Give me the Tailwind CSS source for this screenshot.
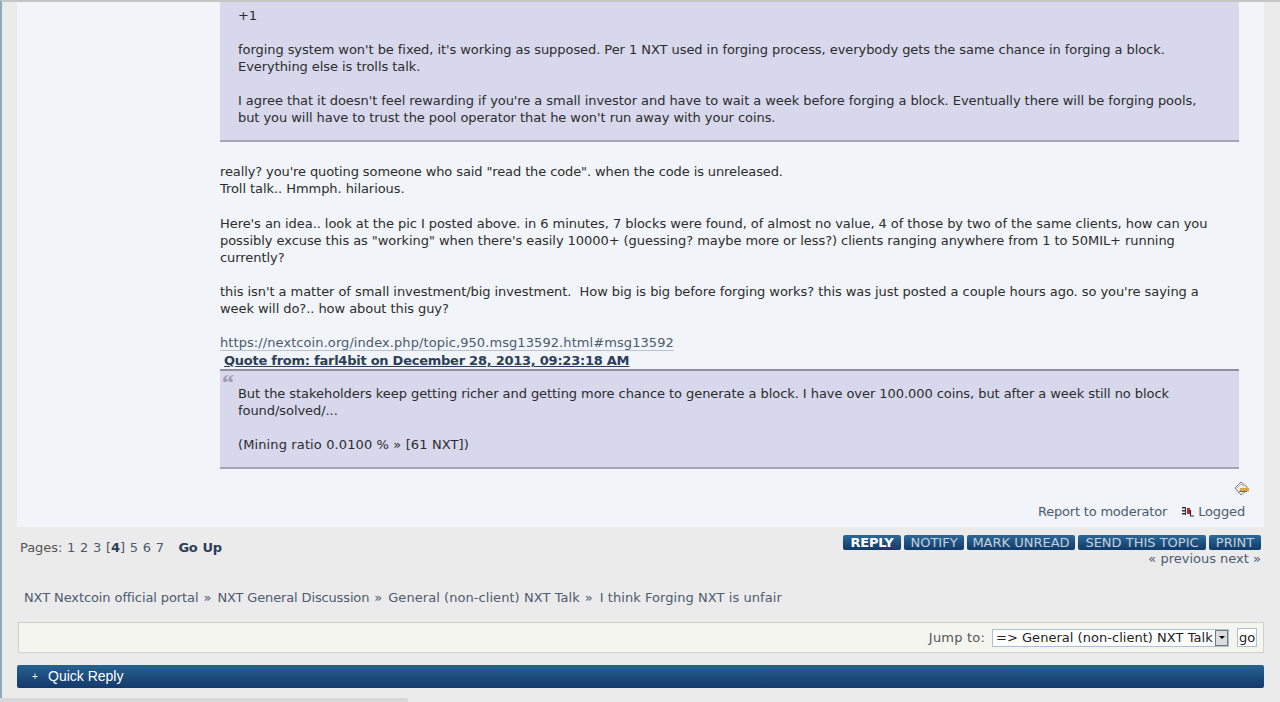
<!DOCTYPE html>
<html lang="en">
<head>
  <meta charset="UTF-8">
  <title>I think Forging NXT is unfair</title>
  <script src="https://cdn.jsdelivr.net/npm/@tailwindcss/browser@4"></script>
</head>
<body class="bg-[#ebebeb] text-[#333] font-['DejaVu_Sans',sans-serif] text-[13px] leading-[17.1px] tracking-[-0.06px] h-[702px] overflow-hidden">
  <div class="h-[702px] relative border-t-2 border-t-[#c4c6c8] border-l-2 border-l-[#8fa9bd] pl-[15px] pr-[16px]">

    <!-- post -->
    <div class="bg-[#f1f5f9] h-[525px] flex flex-col pl-[203px] pr-[25px]">
      <div class="bg-[#d7d8ec] border-b-2 border-b-[#a3a4b6] pl-[18px] pr-[30px] pt-[4.8px] pb-[13.5px] text-[#2c2c2c]">
        +1<br><br>
        forging system won't be fixed, it's working as supposed. Per 1 NXT used in forging process, everybody gets the same chance in forging a block. Everything else is trolls talk.<br><br>
        I agree that it doesn't feel rewarding if you're a small investor and have to wait a week before forging a block. Eventually there will be forging pools, but you will have to trust the pool operator that he won't run away with your coins.
      </div>
      <div class="mt-[21.3px] text-[#2c2c2c]">
        <span class="tracking-[-0.11px]">really? you're quoting someone who said "read the code". when the code is unreleased.</span><br>
        Troll talk.. Hmmph. hilarious.<br><br>
        Here's an idea.. look at the pic I posted above. in 6 minutes, 7 blocks were found, of almost no value, 4 of those by two of the same clients, how can you possibly excuse this as "working" when there's easily 10000+ (guessing? maybe more or less?) clients ranging anywhere from 1 to 50MIL+ running currently?<br><br>
        this isn't a matter of small investment/big investment.&nbsp; How big is big before forging works? this was just posted a couple hours ago. so you're saying a<br>
        week will do?.. how about this guy?<br><br>
        <a href="#" class="text-[#4a5a70] border-b border-b-[#b8c4d4] tracking-[0.08px]">https://nextcoin.org/index.php/topic,950.msg13592.html#msg13592</a>
      </div>
      <a href="#" class="ml-[4px] mt-[0.7px] font-bold underline text-[#2c3e5a] leading-[17px] tracking-[-0.25px]">Quote from: farl4bit on December 28, 2013, 09:23:18 AM</a>
      <div class="bg-[#d7d8ec] border-t-2 border-t-[#8e8fa3] border-b-2 border-b-[#a3a4b6] pl-[18px] pr-[30px] pt-[14px] pb-[13.6px] relative text-[#2c2c2c]">
        <span class="absolute left-[2px] top-[-1px] font-['Liberation_Serif',serif] font-bold text-[24px] leading-[24px] text-[#9a9aa8]">“</span>
        But the stakeholders keep getting richer and getting more chance to generate a block. I have over 100.000 coins, but after a week still no block found/solved/...<br><br>
        <span class="tracking-[0.12px]">(Mining ratio 0.0100 % » [61 NXT])</span>
      </div>
      <div class="flex justify-end mt-[12px] -mr-[10px]">
        <svg width="15" height="15" viewBox="0 0 15 15">
          <path d="M1 7 L7 1 L13 6 L13 9 L7 14 Z" fill="#eef2ea" stroke="#77827a"/>
          <path d="M3 7 L7 3 L10 5.5" fill="none" stroke="#a4aea6"/>
          <path d="M6 7 H15 V10.5 H6 Z" fill="#e0a83a"/>
          <path d="M5 10.5 H13" stroke="#6b665a"/>
        </svg>
      </div>
      <div class="flex justify-end items-center gap-[15px] mt-[7px] -mr-[6px] text-[#4d5b6e]">
        <a href="#" class="tracking-[-0.2px]">Report to moderator</a>
        <span class="flex items-center gap-[4px] tracking-[-0.15px]">
          <svg width="12" height="13" viewBox="0 0 12 13">
            <path d="M0 2 H3 V3.5 H0 Z M0 5 H3 V6.5 H0 Z M0 8 H3 V9.5 H0 Z" fill="#333"/>
            <path d="M3 2 H4 V10 H3 Z" fill="#333"/>
            <path d="M5 3 H8 V9 H5 Z" fill="#b02a2a"/>
            <path d="M8.5 5 V11 H12" fill="none" stroke="#333" stroke-width="1.2"/>
          </svg>
          Logged
        </span>
      </div>
    </div>

    <!-- pages + buttons -->
    <div class="flex justify-between h-[44px] pl-[3px] pr-[3px]">
      <div class="pt-[12px] text-[#555] [word-spacing:0.7px]">
        Pages: <a href="#" class="text-[#4d5b6e]">1</a> <a href="#" class="text-[#4d5b6e]">2</a> <a href="#" class="text-[#4d5b6e]">3</a> [<strong class="text-[#2c3e5a]">4</strong>] <a href="#" class="text-[#4d5b6e]">5</a> <a href="#" class="text-[#4d5b6e]">6</a> <a href="#" class="text-[#4d5b6e]">7</a> &nbsp; <a href="#" class="font-bold text-[#2c3e5a] tracking-[-0.25px]">Go Up</a>
      </div>
      <div class="pt-[8px] flex flex-col items-end">
        <div class="flex gap-[3px] text-[13px] leading-[15px] text-[#c5d0da] tracking-normal text-center">
          <a href="#" class="w-[58px] h-[15px] rounded-[2px] bg-gradient-to-b from-[#2b6a9a] to-[#123a68] font-bold text-white tracking-[-0.2px]">REPLY</a>
          <a href="#" class="w-[60px] h-[15px] rounded-[2px] bg-gradient-to-b from-[#2b6a9a] to-[#123a68]">NOTIFY</a>
          <a href="#" class="w-[108px] h-[15px] rounded-[2px] bg-gradient-to-b from-[#2b6a9a] to-[#123a68]">MARK UNREAD</a>
          <a href="#" class="w-[128px] h-[15px] rounded-[2px] bg-gradient-to-b from-[#2b6a9a] to-[#123a68]">SEND THIS TOPIC</a>
          <a href="#" class="w-[52px] h-[15px] rounded-[2px] bg-gradient-to-b from-[#2b6a9a] to-[#123a68]">PRINT</a>
        </div>
        <div class="text-[#4d5b6e] leading-[18px] tracking-normal"><a href="#">« previous</a> <a href="#">next »</a></div>
      </div>
    </div>

    <!-- breadcrumb -->
    <div class="mt-[18px] pl-[7px] flex gap-[5px] text-[#4d5b6e]">
      <a href="#" class="tracking-[-0.1px]">NXT Nextcoin official portal</a><span class="mr-[1px]">»</span>
      <a href="#" class="tracking-[-0.14px]">NXT General Discussion</a><span class="mr-[1px]">»</span>
      <a href="#" class="tracking-[0.06px]">General (non-client) NXT Talk</a><span class="mr-[2px]">»</span>
      <a href="#" class="tracking-[0.06px]">I think Forging NXT is unfair</a>
    </div>

    <!-- jump to -->
    <div class="mt-[16px] h-[31px] ml-[1px] bg-[#f5f5f0] border border-[#d0d0d0] flex items-center justify-end gap-[7px] pr-[6px] text-[#555]">
      <span class="tracking-[0.2px]">Jump to:</span>
      <span class="w-[237px] h-[18px] bg-white border border-[#a9c0d6] flex items-center justify-between pl-[3px] text-[#222] tracking-[0.03px]">
        => General (non-client) NXT Talk
        <span class="w-[13px] h-[16px] bg-[#dcdcdc] border border-[#777] flex items-center justify-center">
          <span class="w-0 h-0 border-l-[3px] border-r-[3px] border-t-[3px] border-l-transparent border-r-transparent border-t-black"></span>
        </span>
      </span>
      <span class="ml-[1px] w-[20px] h-[19px] bg-white border border-[#a9c0d6] flex items-center justify-center text-[#222]">go</span>
    </div>

    <!-- quick reply -->
    <div class="mt-[12px] h-[23px] rounded-[2px] bg-gradient-to-b from-[#26628f] to-[#14396b] flex items-center pl-[15px] text-white font-['Liberation_Sans',sans-serif] text-[14px] tracking-normal">
      <span class="text-[10px] w-[16px]">+</span>Quick Reply
    </div>

    <!-- scrollbar -->
    <div class="absolute left-[-2px] bottom-0 w-[408px] h-[4px] bg-[#d8d8d8] rounded-tr-[2px]"></div>
  </div>
</body>
</html>
